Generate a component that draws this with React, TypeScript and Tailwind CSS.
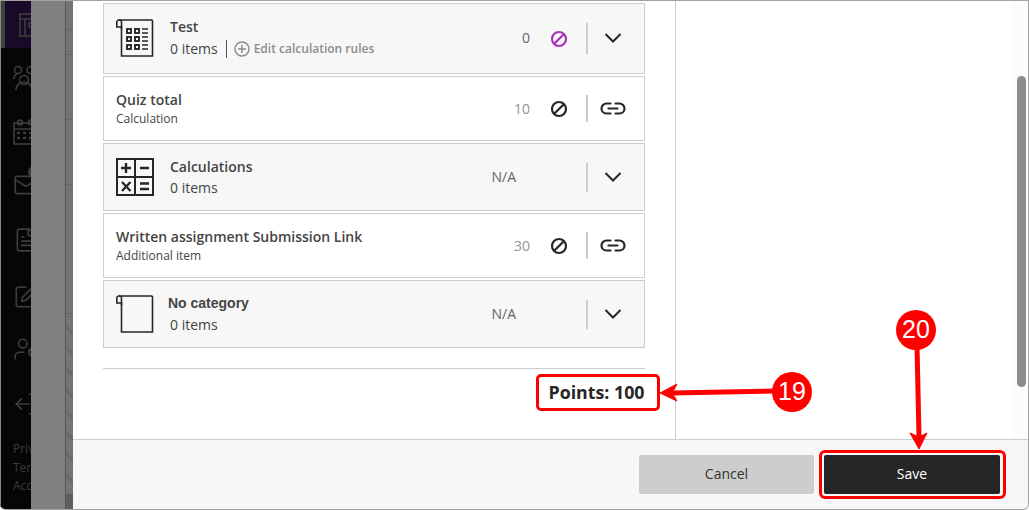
import { FileText, Mail, SquarePen, UserCog, LogOut } from "lucide-react";

const sans = "font-['Open_Sans',sans-serif]";

function BanIcon({ color }: { color: string }) {
  return (
    <svg width="18" height="18" viewBox="0 0 18 18" fill="none" stroke={color} strokeWidth="2.2">
      <circle cx="9" cy="9" r="7" />
      <path d="M13.8 4.2 4.2 13.8" />
    </svg>
  );
}

function Chevron({ low }: { low?: boolean }) {
  return (
    <svg width="18" height="10" viewBox="0 0 18 10" fill="none" stroke="#262626" strokeWidth="2" className={low ? "mt-[2px]" : ""}>
      <path d="M1.500 1 9 8.500 16.500 1" />
    </svg>
  );
}

function LinkIcon() {
  return (
    <svg width="26" height="13" viewBox="0 0 26 13" fill="none" stroke="#262626" strokeWidth="2.2" strokeLinecap="round" className="mt-[2px]">
      <path d="M10.500 1.500H6.500a5 5 0 0 0 0 10h4" />
      <path d="M15.500 1.500h4a5 5 0 0 1 0 10h-4" />
      <path d="M8.500 6.500h9" />
    </svg>
  );
}

function SheetOutline({ children }: { children?: React.ReactNode }) {
  return (
    <svg width="38" height="38" viewBox="0 0 38 38" fill="none" stroke="#262626" strokeWidth="1.6">
      <path d="M5.500 10V2.500a2 2 0 0 0-2-2H3a2 2 0 0 0-2.200 2v5h4.700" transform="translate(0 .5)" />
      <path d="M3 1h32.500a1 1 0 0 1 1 1v35H5.500V7" />
      {children}
    </svg>
  );
}

function CalcSheetIcon() {
  const rows = [10, 18, 26];
  return (
    <SheetOutline>
      {rows.map((y) => (
        <g key={y} strokeWidth="1.900">
          <rect x="11" y={y} width="4" height="4" />
          <rect x="19" y={y} width="4" height="4" />
          <path d={`M26 ${y}h6M26 ${y + 4}h6`} strokeWidth="1.600" />
        </g>
      ))}
    </SheetOutline>
  );
}

function CalcGridIcon() {
  return (
    <svg width="38" height="38" viewBox="0 0 38 38" fill="none" stroke="#262626" strokeWidth="2">
      <rect x="1" y="1" width="36" height="36" />
      <path d="M19 1v36M1 19h36" />
      <path d="M5 10h10M10 5v10M24 10h9M24 25.500h9M24 31h9M6 24l8.500 9M14.500 24 6 33" strokeWidth="2.400" />
    </svg>
  );
}

function Row({
  tall,
  shaded,
  icon,
  title,
  sub,
  value,
  valueClass,
  ban,
  action,
  divider,
}: {
  tall: string;
  shaded?: boolean;
  icon?: React.ReactNode;
  title: React.ReactNode;
  sub: React.ReactNode;
  value: string;
  valueClass: string;
  ban?: string;
  action: React.ReactNode;
  divider: string;
}) {
  return (
    <div className={`flex items-center border border-[#cdcdcd] pl-[12px] ${tall} ${shaded ? "bg-[#f7f7f7]" : "bg-white"}`}>
      {icon && <div className="mr-[16px] flex w-[38px] shrink-0">{icon}</div>}
      <div className="flex-1">
        {title}
        {sub}
      </div>
      <span className={`text-[14px] ${valueClass}`}>{value}</span>
      <div className={`flex justify-center ${ban ? "ml-[20px] mr-[18px] w-[18px]" : ""}`}>
        {ban && <BanIcon color={ban} />}
      </div>
      <div className={`w-[2px] bg-[#cdcdcd] ${divider}`} />
      <div className="flex w-[56px] flex-col items-center pb-[2px] pr-[6px]">{action}</div>
    </div>
  );
}

function Annotations() {
  return (
    <>
      <div className="absolute left-[536px] top-[373px] flex h-[37px] w-[124px] items-center justify-center rounded-[5px] border-[3px] border-[#ff0000] bg-white pb-[1px] pr-[3px] text-[17.800px] font-bold text-[#262626]">
        Points: 100
      </div>
      <div className="absolute left-[819px] top-[449px] h-[49px] w-[187px] rounded-[6px] border-[3px] border-[#ff0000]" />
      <svg className="absolute left-0 top-0" width="1029" height="510" fill="none">
        <path d="M775 390 672 392" stroke="#ff0000" strokeWidth="5" />
        <path d="M660 392 677 383 672 392 677 400Z" fill="#ff0000" stroke="#ff0000" strokeWidth="1" />
        <path d="M917 345 919 436" stroke="#ff0000" strokeWidth="5" />
        <path d="M919 448 910 432 919 436 927 432Z" fill="#ff0000" stroke="#ff0000" strokeWidth="1" />
      </svg>
      <div className="absolute left-[772px] top-[371px] flex h-[40px] w-[40px] items-center justify-center rounded-full bg-[#ff0000] font-['Liberation_Sans',sans-serif] text-[25px] text-white">
        19
      </div>
      <div className="absolute left-[896px] top-[309px] flex h-[40px] w-[40px] items-center justify-center rounded-full bg-[#ff0000] font-['Liberation_Sans',sans-serif] text-[25px] text-white">
        20
      </div>
    </>
  );
}

export default function App() {
  const title = "text-[14px] font-semibold leading-[20px] text-[#444444]";
  const count = "mt-[1px] text-[14px] leading-[20px] text-[#444444]";
  const small = "text-[12px] leading-[18px] text-[#444444]";
  const navIcon = "shrink-0";

  return (
    <div className={`relative flex h-[510px] w-[1029px] overflow-hidden rounded-b-[6px] border border-l-0 border-[#a3a3a3] bg-[#808080] ${sans}`}>
      {/* dimmed course nav behind the panel */}
      <div className="flex h-full w-[31px] shrink-0 flex-col overflow-hidden border-l border-[#8a8a8a] bg-[#060606] text-[#3d3d3d]">
        <div className="flex h-[47px] shrink-0 items-center border-l-[4px] border-[#404040] bg-[#190a2a] pl-[14px]">
          <svg width="24" height="24" viewBox="0 0 24 24" fill="none" stroke="currentColor" strokeWidth="1.600" className={navIcon}>
            <rect x="1" y="1" width="22" height="22" />
            <path d="M1 6h22M6 6v17" />
            <rect x="10" y="10" width="4" height="4" />
          </svg>
        </div>
        <div className="flex flex-col pl-[12px] pt-[17px]">
          <svg width="26" height="26" viewBox="0 0 26 26" fill="none" stroke="currentColor" strokeWidth="1.600" className={navIcon}>
            <circle cx="5" cy="5" r="3.500" />
            <circle cx="17.500" cy="5" r="3.500" />
            <circle cx="11" cy="15" r="4.500" />
            <path d="M1 14c0-3 1-4.500 3-4.500M21.500 14c0-3-1-4.500-3-4.500M3 25a8 8 0 0 1 16 0" />
          </svg>
          <svg width="26" height="26" viewBox="0 0 26 26" fill="none" stroke="currentColor" strokeWidth="1.600" className={`${navIcon} mt-[28px]`}>
            <rect x="1" y="4" width="24" height="21" />
            <path d="M1 10h24" />
            <circle cx="7" cy="3.500" r="2.500" />
            <circle cx="18" cy="3.500" r="2.500" />
            <path d="M4 14h3M10 14h3M16 14h3M4 19h3M10 19h3M16 19h3" strokeWidth="2.500" />
          </svg>
          <div className="relative mt-[27px] h-[26px] w-[26px] shrink-0">
            <Mail size={26} className={navIcon} strokeWidth={1.5} />
            <div className="absolute -top-[6px] left-[15px] h-[12px] w-[12px] rounded-full bg-[#3d3d3d]" />
          </div>
          <FileText size={26} className={`${navIcon} mt-[29px]`} strokeWidth={1.5} />
          <SquarePen size={26} className={`${navIcon} mt-[31px]`} strokeWidth={1.5} />
          <UserCog size={26} className={`${navIcon} mt-[26px]`} strokeWidth={1.5} />
          <LogOut size={26} className={`${navIcon} mt-[29px] rotate-180`} strokeWidth={1.5} />
        </div>
        <div className="mt-[23px] whitespace-nowrap pl-[12px] text-[12px] leading-[18.500px]">
          <div>Privacy</div>
          <div>Terms</div>
          <div>Accessibility</div>
        </div>
      </div>

      {/* scrim */}
      <div className="h-full w-[34px] shrink-0 bg-[#808080]" />
      <div className="flex h-full w-[8px] shrink-0 flex-col border-l border-[#555555] bg-[#747474]">
        <div className="h-[29px] shrink-0 border-b border-[#666666]" />
        <div className="h-[25px] shrink-0 border-b border-[#666666]" />
        <div className="h-[65px] shrink-0 border-b border-[#666666]" />
        <div className="h-[65px] shrink-0 border-b border-[#666666]" />
        <div className="h-[129px] shrink-0 border-b border-[#666666]" />
        <div className="flex-1 bg-[repeating-linear-gradient(45deg,#747474_0px,#747474_12px,#6a6a6a_12px,#6a6a6a_15px)]" />
        <div className="h-[15px] shrink-0 bg-[#5f5f5f]" />
      </div>

      {/* panel */}
      <div className="relative flex min-w-0 flex-1 flex-col bg-white">
        <div className="flex min-h-0 flex-1">
          <div className="w-[602px] shrink-0 px-[30px] pt-[2px]">
            <div className="flex flex-col gap-[2px]">
              <Row
                shaded
                tall="h-[71px]"
                icon={
                  <div className="-mt-[2px]">
                    <CalcSheetIcon />
                  </div>
                }
                title={<div className={title}>Test</div>}
                sub={
                  <div className="mb-[2px] mt-[2px] flex items-center">
                    <span className="text-[14px] leading-[20px] text-[#444444]">0 items</span>
                    <span className="ml-[8px] mr-[7px] h-[18px] w-px bg-[#555555]" />
                    <svg width="16" height="16" viewBox="0 0 16 16" fill="none" stroke="#8c8c8c" strokeWidth="1.500" className="mr-[4px]">
                      <circle cx="8" cy="8" r="7" />
                      <path d="M8 4v8M4 8h8" />
                    </svg>
                    <span className="text-[12px] font-semibold text-[#8c8c8c]">Edit calculation rules</span>
                  </div>
                }
                value="0"
                valueClass="pb-[2px] text-[#666666]"
                ban="#a833b9"
                divider="h-[31px]"
                action={<Chevron />}
              />
              <Row
                tall="h-[65px]"
                title={<div className={title}>Quiz total</div>}
                sub={<div className={small}>Calculation</div>}
                value="10"
                valueClass="text-[#949494]"
                ban="#262626"
                divider="h-[27px]"
                action={<LinkIcon />}
              />
              <Row
                shaded
                tall="h-[68px]"
                icon={<CalcGridIcon />}
                title={<div className={title}>Calculations</div>}
                sub={<div className={count}>0 items</div>}
                value="N/A"
                valueClass="mr-[70px] pb-[2px] text-[#666666]"
                divider="h-[29px]"
                action={<Chevron low />}
              />
              <Row
                tall="h-[65px]"
                title={<div className={title}>Written assignment Submission Link</div>}
                sub={<div className={small}>Additional item</div>}
                value="30"
                valueClass="text-[#949494]"
                ban="#262626"
                divider="h-[27px]"
                action={<LinkIcon />}
              />
              <Row
                shaded
                tall="h-[68px]"
                icon={<SheetOutline />}
                title={<div className="-ml-[2px] font-['Liberation_Sans',sans-serif] text-[14px] font-bold leading-[20px] text-[#444444]">No category</div>}
                sub={<div className="mt-[2px] text-[14px] leading-[20px] text-[#444444]">0 items</div>}
                value="N/A"
                valueClass="mr-[70px] pb-[2px] text-[#666666]"
                divider="h-[29px]"
                action={<Chevron low />}
              />
            </div>
            <div className="mt-[20px] border-t border-[#cdcdcd]" />
          </div>
          <div className="flex-1 border-l border-[#cdcdcd] bg-white" />
        </div>

        <div className="flex h-[70px] shrink-0 items-center justify-end gap-[10px] border-t border-[#cdcdcd] bg-[#f7f7f7] pr-[28px]">
          <button className="h-[39px] w-[175px] rounded-[2px] bg-[#cdcdcd] pb-[2px] text-[14px] text-[#333333]">Cancel</button>
          <button className="h-[39px] w-[176px] rounded-[2px] bg-[#262626] pb-[2px] text-[14px] font-medium text-white">Save</button>
        </div>

        {/* scrollbar */}
        <div className="absolute bottom-[70px] left-[941px] top-0 w-[13px] bg-[#fcfcfc]">
          <div className="ml-[3px] mt-[75px] h-[311px] w-[9px] rounded-full bg-[#8c8c8c]" />
        </div>
      </div>

      <Annotations />
    </div>
  );
}
